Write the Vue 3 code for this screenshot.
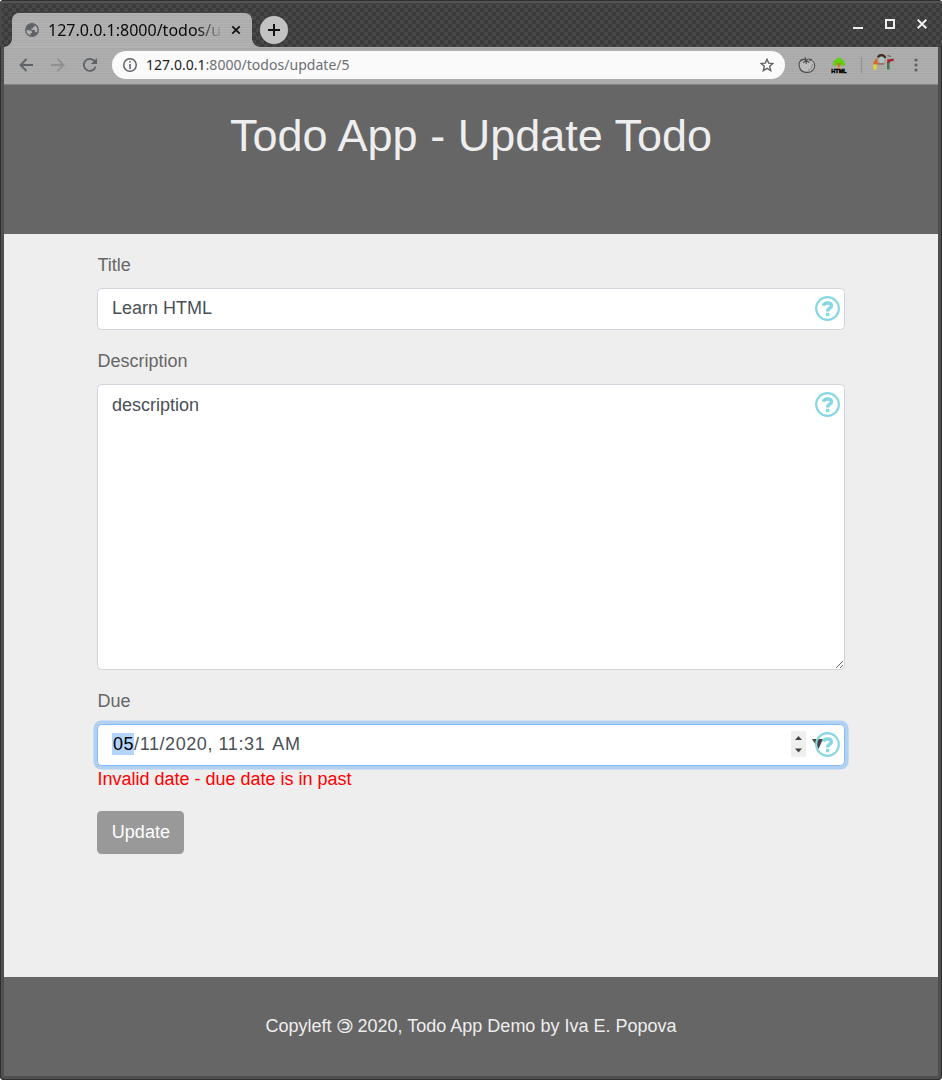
<script setup>
import { ref } from 'vue'

const title = ref('Learn HTML')
const description = ref('description')
</script>

<template>
  <div class="window">
    <div class="tabstrip">
      <div class="tab">
        <svg class="globe" width="14" height="14" viewBox="0 0 14 14">
          <circle cx="7" cy="7" r="7" fill="#5f6368" />
          <path d="M1.500 6.500 3.500 7.500H6L7 8.800V10H5.500V12.300A5.600 5.600 0 0 1 1.500 6.500ZM8.500 1.700A5.500 5.500 0 0 1 12.300 8.500L11.200 9.500 9.800 8.300V7H6.500V5.500H8V4H9.500V2.500Z" fill="#b2b2b2" />
        </svg>
        <span class="tab-title">127.0.0.1:8000/todos/u</span>
        <svg class="tab-close" width="10" height="10" viewBox="0 0 10 10"><path d="M1.300 1.300 8.700 8.700M8.700 1.300 1.300 8.700" stroke="#111" stroke-width="1.800" /></svg>
      </div>
      <div class="new-tab">
        <svg width="12" height="12" viewBox="0 0 12 12"><path d="M6 0V12M0 6H12" stroke="#111" stroke-width="2" /></svg>
      </div>
      <div class="window-buttons">
        <svg width="10" height="12" viewBox="0 0 10 12"><path d="M0 10H10" stroke="#eee" stroke-width="2" /></svg>
        <svg width="10" height="12" viewBox="0 0 10 12"><path d="M1 2H9V10H1Z" fill="none" stroke="#eee" stroke-width="2" /></svg>
        <svg width="10" height="12" viewBox="0 0 10 12"><path d="M.7 1.700 9.300 10.300M9.300 1.700.7 10.300" stroke="#eee" stroke-width="2" /></svg>
      </div>
    </div>

    <div class="toolbar">
      <svg class="nav back" width="14" height="14" viewBox="0 0 14 14"><path d="M14 7H1.500M7.500 1 1.500 7l6 6" fill="none" stroke="#5f6368" stroke-width="1.900" /></svg>
      <svg class="nav forward" width="14" height="14" viewBox="0 0 14 14"><path d="M0 7H12.500M6.500 1l6 6-6 6" fill="none" stroke="#8f9193" stroke-width="1.900" /></svg>
      <svg class="nav reload" width="14" height="14" viewBox="0 0 14 14"><path d="M12.600 8.700A6 6 0 1 1 11.200 2.700L12.800 4.300" fill="none" stroke="#5f6368" stroke-width="1.800" /><path d="M14 0V6H8Z" fill="#5f6368" /></svg>
      <div class="omnibox">
        <svg width="14" height="14" viewBox="0 0 14 14"><circle cx="7" cy="7" r="6.250" fill="none" stroke="#5f6368" stroke-width="1.500" /><path d="M7 6V11M7 3V4.600" stroke="#5f6368" stroke-width="1.600" /></svg>
        <span class="url"><b>127.0.0.1</b>:8000/todos/update/5</span>
        <svg class="star" width="14" height="14" viewBox="0 0 14 14"><path d="M7 1.300 8.700 5.100 12.900 5.500 9.700 8.300 10.700 12.600 7 10.300 3.300 12.600 4.300 8.300 1.100 5.500 5.300 5.100Z" fill="none" stroke="#5f6368" stroke-width="1.400" /></svg>
      </div>
      <svg class="tomato" width="18" height="18" viewBox="0 0 18 18">
        <path d="M4.500 3.800C1.300 5 .7 8 1.300 10.500 2.300 15 5.500 16.500 9.200 16.400 14 16.400 16.700 13 16.700 9.500 16.700 6 14 4 11 4" fill="#c6c6c6" fill-opacity=".6" stroke="#4d4d4d" stroke-width="1.100" />
        <path d="M2.500 4.200C5 3 7 3.200 8.200 4.500L7 1.200M8.200 4.500C10 2.500 12 2.800 13.700 4M8.200 4.500l3.300 2M8.200 4.500 5 6.800M8.200 4.500V8" fill="none" stroke="#4d4d4d" stroke-width="1.100" />
        <path d="M14.500 8C14.500 11 13 13.500 10 14.300" fill="none" stroke="#888" stroke-width="1" />
      </svg>
      <svg class="tree" width="16" height="17" viewBox="0 0 16 17">
        <path d="M4 8.800C2 8.800 1.200 7.200 2.500 5.700 2 4 3.500 3 4.500 3.200 5-.5 11-.5 11.500 3 13 3 13.700 4.500 13.200 5.700 15.500 7 14 8.800 12 8.800L9 8H7Z" fill="#61cf12" />
        <path d="M8 12V6M8 8.500 5.800 6.500M8 8.500l2.200-2" fill="none" stroke="#bf7a1b" stroke-width="1.200" />
        <path d="M5.500 11.500 8 10l3 1.500" fill="#e79937" />
        <text x="8" y="16.200" text-anchor="middle" textLength="15.500" lengthAdjust="spacingAndGlyphs">HTML</text>
      </svg>
      <span class="divider"></span>
      <svg class="profile" width="22" height="18" viewBox="0 0 22 18">
        <path d="M.5 10.500V8.500L3 4.500H4.700V10.500Z" fill="#de6426" />
        <path d="M2 15.500V10.500" stroke="#eadb27" stroke-width="2.800" />
        <circle cx="8.500" cy="6" r="3.800" fill="#a9c4c5" stroke="#a99383" stroke-width="1" />
        <path d="M5 3.500C6 .3 11 .2 12.300 4" fill="none" stroke="#442b22" stroke-width="2.200" />
        <path d="M5 10H11" stroke="#8a4a3c" stroke-width="1.200" />
        <path d="M15.300 15.500V8" stroke="#4a7950" stroke-width="2.600" />
        <path d="M14.300 6.500H15.500V9M15.500 8C16.500 6 18 5.500 20.700 6" fill="none" stroke="#9f292e" stroke-width="2.300" />
        <path d="M14.500 1.500 18 2.500" stroke="#676767" stroke-width="1.200" />
      </svg>
      <svg class="menu" width="4" height="14" viewBox="0 0 4 14" fill="#5f6368"><circle cx="2" cy="2" r="1.600" /><circle cx="2" cy="7" r="1.600" /><circle cx="2" cy="12" r="1.600" /></svg>
    </div>

    <header class="page-header"><h1>Todo App - Update Todo</h1></header>

    <main>
      <form @submit.prevent>
        <label for="title">Title</label>
        <div class="field">
          <input id="title" v-model="title" class="control" type="text">
          <svg class="help" viewBox="0 0 26 26"><circle cx="13" cy="13" r="11.800" /><path d="M8.800 10.200C9.300 6.500 17 6 17 10.200 17 13 13.100 12.500 13.100 16" /><path d="M11.400 17.500h3.500V21h-3.500Z" class="dot" /></svg>
        </div>
        <label for="description">Description</label>
        <div class="field">
          <textarea id="description" v-model="description" class="control" spellcheck="false"></textarea>
          <svg class="help" viewBox="0 0 26 26"><circle cx="13" cy="13" r="11.800" /><path d="M8.800 10.200C9.300 6.500 17 6 17 10.200 17 13 13.100 12.500 13.100 16" /><path d="M11.400 17.500h3.500V21h-3.500Z" class="dot" /></svg>
        </div>
        <label>Due</label>
        <div class="field">
          <div class="control date">
            <span class="date-value"><mark>05</mark>/11/2020, 11:31 <span class="meridiem">AM</span></span>
            <svg class="spinner" width="15" height="26" viewBox="0 0 15 26"><path d="M0 0H15V26H0Z" fill="#efefef" /><path d="M4 9 7.500 5 11 9ZM4 17.500H11L7.500 21.500Z" fill="#444" /></svg>
            <svg class="arrow" width="11" height="10" viewBox="0 0 11 10"><path d="M0 0H11L6.500 10Z" fill="#444" /></svg>
          </div>
          <svg class="help" viewBox="0 0 26 26"><circle cx="13" cy="13" r="11.800" /><path d="M8.800 10.200C9.300 6.500 17 6 17 10.200 17 13 13.100 12.500 13.100 16" /><path d="M11.400 17.500h3.500V21h-3.500Z" class="dot" /></svg>
        </div>
        <p class="error">Invalid date - due date is in past</p>
        <button type="submit">Update</button>
      </form>
    </main>

    <footer>
      <span>Copyleft <span class="copyleft">©</span> 2020, Todo App Demo by Iva E. Popova</span>
    </footer>
  </div>
</template>

<style>
body { background: #fff; overflow: hidden; }
</style>

<style scoped>
* { box-sizing: border-box; }
.window {
  height: 1080px;
  display: flex;
  flex-direction: column;
  padding: 0 4px 4px;
  overflow: hidden;
  border-radius: 4px;
  background: #4f4f4f;
  box-shadow: inset 0 0 0 1px #303030;
  font: 18px/27px "Liberation Sans", Arial, sans-serif;
}
.tabstrip {
  height: 47px;
  flex: none;
  margin: 0 -4px;
  padding: 12px 15px 0 12px;
  display: flex;
  border-top: 1px solid #303030;
  box-shadow: inset 0 2px #545454, inset 2px 0 #484848;
  background: repeating-conic-gradient(#3b3b3b 0 25%, #484848 0 50%) 0 3px / 8px 8px;
}
.tab {
  position: relative;
  width: 240px;
  height: 34px;
  display: flex;
  align-items: center;
  padding: 0 11px 0 13px;
  border-radius: 7px 7px 0 0;
  background: repeating-linear-gradient(#b5b5b5 0 1px, #adadad 1px 3px, #b2b2b2 3px 4px, #a9a9a9 4px 5px);
}
.tab::before, .tab::after {
  content: "";
  position: absolute;
  bottom: 0;
  width: 8px;
  height: 8px;
}
.tab::before { left: -8px; background: radial-gradient(circle at 0 0, transparent 7.500px, #ababab 8px); }
.tab::after { right: -8px; background: radial-gradient(circle at 100% 0, transparent 7.500px, #ababab 8px); }
.globe { flex: none; }
.tab-title {
  width: 174px;
  margin: 0 9px;
  white-space: nowrap;
  font: 16px/24px "Noto Sans", sans-serif;
  color: #0a0a0a;
  -webkit-mask-image: linear-gradient(90deg, #000 148px, transparent 176px);
  mask-image: linear-gradient(90deg, #000 148px, transparent 176px);
}
.tab-close { flex: none; }
.new-tab {
  width: 28px;
  height: 28px;
  margin: 3px 0 0 8px;
  border-radius: 50%;
  display: grid;
  place-items: center;
  background: #c2c2c2;
}
.window-buttons { margin: 5px 0 0 auto; display: flex; gap: 22px; }
.toolbar {
  height: 38px;
  flex: none;
  display: flex;
  align-items: center;
  padding: 0 20px 1px 15px;
  border-bottom: 1px solid #858585;
  background: repeating-linear-gradient(#b1b1b1 0 1px, #a7a7a7 1px 2px, #adadad 2px 4px, #a9a9a9 4px 5px);
}
.forward { margin-left: 18px; }
.reload { margin-left: 18px; }
.omnibox {
  width: 673px;
  height: 28px;
  margin-left: 15px;
  padding: 0 11px;
  display: flex;
  align-items: center;
  border-radius: 14px;
  background: #fafafa;
}
.url { margin-left: 9px; font: 14px/20px "Noto Sans", sans-serif; letter-spacing: .03px; color: #6c7074; }
.url b { font-weight: 400; color: #202124; }
.star { margin-left: auto; }
.tomato { margin-left: 13px; }
.tree { margin-left: 15px; }
.tree text { font: 900 6px "Liberation Sans", sans-serif; fill: #000; stroke: #000; stroke-width: .5px; }
.divider { width: 1px; height: 16px; margin-left: 14px; background: #909090; }
.profile { margin: -5px 0 0 11px; }
.menu { margin-left: auto; }
.page-header {
  height: 149px;
  flex: none;
  padding-top: 24px;
  background: #666;
  color: #eee;
  text-align: center;
}
h1 { margin: 0; font-size: 45px; line-height: 54px; font-weight: 400; }
main { flex: 1; padding: 18px 93.400px 0; background: #eee; color: #666; }
label { display: block; margin-bottom: 9px; height: 27px; }
.field { position: relative; margin-bottom: 18px; }
.control {
  display: block;
  width: 100%;
  height: 42px;
  padding: 6px 13.500px 8px;
  border: 1px solid #ced4da;
  border-radius: 4.500px;
  outline: none;
  background: #fff;
  color: #495057;
  font: 18px/27px "Liberation Sans", Arial, sans-serif;
}
textarea.control { height: 286px; resize: vertical; padding-top: 7px; }
.help {
  position: absolute;
  top: 8px;
  right: 4.600px;
  width: 25px;
  height: 25px;
  fill: none;
  stroke: #86d7e1;
  stroke-width: 2.200;
}
.help path { stroke-width: 3.700; }
.help .dot { fill: #86d7e1; stroke: none; }
.date {
  display: flex;
  align-items: center;
  padding: 0 21px 0 14px;
  border-color: #80bdff;
  box-shadow: 0 0 0 3.600px rgba(0, 123, 255, .25);
}
.date-value { letter-spacing: .58px; margin-top: -2px; white-space: nowrap; }
.meridiem { margin-left: 1.500px; }
mark { background: #b3d4fd; color: #000; padding: 1px 0 1px .5px; }
.spinner { margin: -2px 6px 0 auto; }
.arrow { margin-top: -2px; }
.error { margin: -18px 0 18px; color: red; }
button {
  display: block;
  width: 87px;
  height: 43px;
  padding: 0;
  border: 0;
  border-radius: 4.500px;
  background: #999;
  color: #fff;
  font: inherit;
}
footer {
  height: 99px;
  flex: none;
  display: flex;
  align-items: center;
  justify-content: center;
  padding-bottom: 2px;
  background: #666;
  color: #eee;
}
.copyleft {
  display: inline-block;
  margin: 0 -1px;
  transform: translateY(1px) rotate(180deg) scale(1.120);
  font-family: "DejaVu Sans", sans-serif;
  -webkit-text-stroke: .2px #eee;
}
</style>
